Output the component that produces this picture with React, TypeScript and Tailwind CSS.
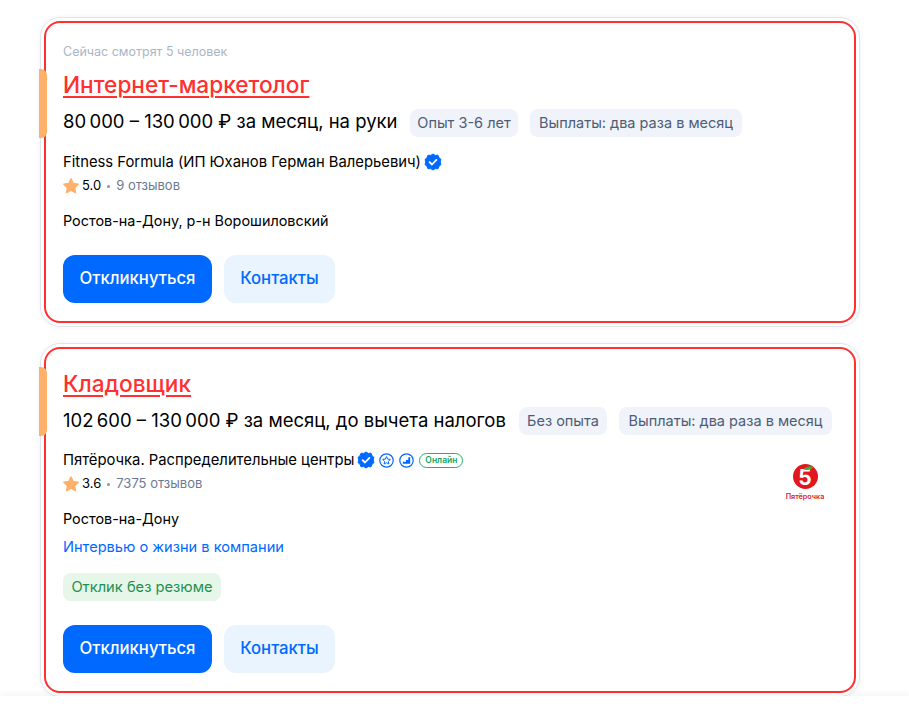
const font = { fontFamily: "Inter, 'Noto Sans', sans-serif" }

function Verified() {
  return (
    <svg width="18" height="18" viewBox="0 0 18 18" className="shrink-0">
      <path
        d="M9 1l2.300 1.400 2.700-.2 1 2.500 2 1.800-.8 2.500.8 2.500-2 1.800-1 2.500-2.700-.2L9 17l-2.300-1.400-2.700.2-1-2.500-2-1.800.8-2.500L1 6.500l2-1.800 1-2.500 2.700.2z"
        fill="#0069ff"
        stroke="#0069ff"
        strokeLinejoin="round"
      />
      <path d="M5.600 9.200l2.400 2.300 4.400-4.600" fill="none" stroke="#fff" strokeWidth="1.800" strokeLinecap="round" strokeLinejoin="round" />
    </svg>
  )
}

function Star() {
  return (
    <svg width="18" height="18" viewBox="0 0 16 16" className="shrink-0 -ml-[1px]">
      <path
        d="M8 1.800l1.900 4 4.400.6-3.200 3 .8 4.400L8 11.700l-3.900 2.100.8-4.400-3.200-3 4.400-.6z"
        fill="#ffb06b"
        stroke="#ffb06b"
        strokeWidth="1.400"
        strokeLinejoin="round"
      />
    </svg>
  )
}

function StarBadge() {
  return (
    <svg width="15" height="15" viewBox="0 0 15 15" className="shrink-0">
      <circle cx="7.500" cy="7.500" r="6.700" fill="none" stroke="#0069ff" strokeWidth="1.200" />
      <path d="M7.500 3.600l1.200 2.500 2.700.3-2 1.900.5 2.700-2.400-1.300-2.400 1.300.5-2.700-2-1.900 2.700-.3z" fill="none" stroke="#0069ff" strokeWidth="1" strokeLinejoin="round" />
    </svg>
  )
}

function StepBadge() {
  return (
    <svg width="15" height="15" viewBox="0 0 15 15" className="shrink-0">
      <circle cx="7.500" cy="7.500" r="6.700" fill="none" stroke="#0069ff" strokeWidth="1.200" />
      <path d="M3.800 10.800h7.400V4.200H9.300v2.800H7v1.700H3.800z" fill="#0069ff" />
    </svg>
  )
}

function PyaterochkaLogo() {
  return (
    <div className="flex w-[50px] flex-col items-center">
      <div className="relative flex h-[25px] w-[25px] items-center justify-center rounded-full bg-[#e2171d] pt-[3px] text-[21px] font-bold leading-[22px] text-white">
        <span>5</span>
        <svg width="25" height="25" viewBox="0 0 25 25" className="absolute top-0 left-0">
          <path d="M10.500 5.600c2.400-3.400 6.500-4 10-2.800-2.200 3-6 4-10 2.800z" fill="#46a83a" />
        </svg>
      </div>
      <span className="mt-[3px] text-[7.200px] font-semibold leading-[9px] whitespace-nowrap text-[#d9232a]">Пятёрочка</span>
    </div>
  )
}

function Tag({ className, children }: { className: string; children: string }) {
  return (
    <span className={"flex h-7 items-center justify-center rounded-lg bg-[#f0f3fa] text-[14.500px] text-[#4e5d75] whitespace-nowrap " + className}>{children}</span>
  )
}

function Rating({ value, reviews }: { value: string; reviews: string }) {
  return (
    <div className="mt-[4px] flex h-5 items-center text-[13px] text-black">
      <Star />
      <span className="ml-[2px]">{value}</span>
      <span className="mx-[6px] h-[3px] w-[3px] rounded-full bg-[#8a97ab]" />
      <span className="text-[#6c7a90]">{reviews}</span>
    </div>
  )
}

function Buttons() {
  return (
    <div className="flex gap-3">
      <button className="h-12 w-[149px] rounded-xl bg-[#0069ff] text-[16.700px] font-medium text-white">Откликнуться</button>
      <button className="h-12 w-[111px] rounded-xl bg-[#e9f4ff] text-[16.700px] font-medium text-[#0069ff]">Контакты</button>
    </div>
  )
}

function Card({ className, barClass, children }: { className: string; barClass: string; children: React.ReactNode }) {
  return (
    <div className={"relative rounded-[20px] border border-[#dfe4ee] p-[3px] shadow-[0_0_4px_rgba(60,90,140,0.08)] " + className}>
      <div className={"absolute -left-[2px] w-[8px] rounded-r-[6px] bg-[#ffb06b] " + barClass} />
      <div className="h-full rounded-[16px] border-2 border-[#ff3030] pl-[17px] pr-[22px]">{children}</div>
    </div>
  )
}

export default function App() {
  return (
    <div className="relative h-[707px] overflow-hidden bg-white text-black" style={font}>
      <div className="ml-[40px] w-[820px] pt-[17px]">
        <Card className="h-[310px]" barClass="top-[51px] h-[69px]">
          <div className="pt-[21px]">
            <p className="text-[12.500px] leading-4 text-[#a9b6c6]">Сейчас смотрят 5 человек</p>
            <h2 className="mt-[10px] text-[22.600px] font-medium leading-[30px] text-[#ff3030] underline underline-offset-[3px] decoration-2">Интернет-маркетолог</h2>
            <div className="mt-[9px] flex items-center gap-3">
              <span className="w-[335px] -translate-y-[2px] text-[18.500px] leading-7 whitespace-nowrap">{"80\u2009000 – 130\u2009000 ₽ за месяц, на руки"}</span>
              <Tag className="w-[108px]">Опыт 3-6 лет</Tag>
              <Tag className="w-[212px]">Выплаты: два раза в месяц</Tag>
            </div>
            <div className="mt-[15px] flex h-5 items-center gap-[3px] text-[14.800px]">
              <span>Fitness Formula (ИП Юханов Герман Валерьевич)</span>
              <Verified />
            </div>
            <Rating value="5.0" reviews="9 отзывов" />
            <p className="mt-[15px] text-[14.400px] leading-5">Ростов-на-Дону, р-н Ворошиловский</p>
            <div className="mt-[24px]">
              <Buttons />
            </div>
          </div>
        </Card>
        <Card className="mt-[16px] h-[354px]" barClass="top-[23px] h-[69px]">
          <div className="pt-[20px]">
            <h2 className="text-[22.600px] font-medium leading-[30px] text-[#ff3030] underline underline-offset-[3px] decoration-2">Кладовщик</h2>
            <div className="mt-[8px] flex items-center gap-3">
              <span className="w-[444px] -translate-y-[1px] text-[18.500px] leading-7 whitespace-nowrap">{"102\u2009600 – 130\u2009000 ₽ за месяц, до вычета налогов"}</span>
              <Tag className="w-[88px]">Без опыта</Tag>
              <Tag className="w-[213px]">Выплаты: два раза в месяц</Tag>
            </div>
            <div className="relative mt-[15px] flex h-5 items-center gap-[3px] text-[14.800px]">
              <span>Пятёрочка. Распределительные центры</span>
              <Verified />
              <span className="ml-[1px] flex items-center gap-[5px]">
                <StarBadge />
                <StepBadge />
              </span>
              <span className="ml-[2px] flex h-[15px] w-[44px] items-center justify-center rounded-full border border-[#1fb56a] text-[8.500px] font-semibold text-[#12a35b]">Онлайн</span>
              <div className="absolute top-[14px] right-[2px]">
                <PyaterochkaLogo />
              </div>
            </div>
            <Rating value="3.6" reviews="7375 отзывов" />
            <p className="mt-[15px] text-[14.400px] leading-5">Ростов-на-Дону</p>
            <p className="mt-2 text-[14.600px] leading-5 text-[#0069ff]">Интервью о жизни в компании</p>
            <span className="mt-[16px] inline-flex h-7 w-[158px] items-center justify-center rounded-lg bg-[#e6f7ea] text-[14.700px] text-[#1f8f50]">Отклик без резюме</span>
            <div className="mt-[24px]">
              <Buttons />
            </div>
          </div>
        </Card>
      </div>
      <div className="absolute right-0 bottom-0 left-0 h-[11px] bg-white shadow-[0_-2px_6px_rgba(20,40,80,0.05)]" />
    </div>
  )
}
